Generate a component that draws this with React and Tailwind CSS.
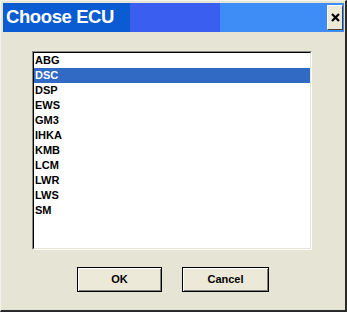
const items = ['ABG', 'DSC', 'DSP', 'EWS', 'GM3', 'IHKA', 'KMB', 'LCM', 'LWR', 'LWS', 'SM'];

export default function App() {
  const selected = 'DSC';

  return (
    <div className="w-[347px] h-[312px] flex flex-col bg-[#e6e5d5] border-t border-l border-t-[#f4f3ea] border-l-[#f4f3ea] border-r-2 border-b-2 border-r-[#2a2a2a] border-b-[#2a2a2a] pt-[2px] pl-[2px] pr-[1px] font-['Liberation_Sans',Arial,sans-serif]">
      {/* title bar */}
      <div className="h-[29px] flex items-center justify-between pl-[3px] pr-[1px] bg-[linear-gradient(to_right,#0b5bd3_0,#0b5bd3_127px,#3a5ef0_127px,#3a5ef0_217px,#3e8cf5_217px)]">
        <span className="text-white font-bold text-[18.5px] tracking-[-0.4px] leading-none">Choose ECU</span>
        <button className="w-[16px] h-[25px] flex items-center justify-center bg-[#ece9d8] border border-t-white border-l-white border-b-[#404040] border-r-[#404040]">
          <svg width="9" height="9" viewBox="0 0 9 9">
            <path d="M1 1 L8 8 M8 1 L1 8" stroke="#000" strokeWidth="2.2" />
          </svg>
        </button>
      </div>

      {/* body */}
      <div className="flex-1 flex flex-col pt-[19px]">
        <div className="ml-[29px] w-[280px] h-[199px] border border-t-[#8a8a80] border-l-[#8a8a80] border-b-white border-r-white">
          <div className="h-full bg-white border border-t-black border-l-black border-b-[#e6e5d5] border-r-[#e6e5d5]">
            {items.map((name) => (
              <div
                key={name}
                className={`h-[15px] pl-[1px] flex items-center text-[11px] font-bold leading-none ${
                  name === selected ? 'bg-[#316ac5] text-white' : 'text-black'
                }`}
              >
                {name}
              </div>
            ))}
          </div>
        </div>

        <div className="ml-[74px] flex gap-[20px] mt-[17px]">
          <button className="w-[85px] h-[25px] border border-black bg-[#ece9d8] shadow-[inset_1px_1px_0_#ffffff,inset_-1px_-1px_0_#808080] text-[11px] font-bold text-black">
            OK
          </button>
          <button className="w-[87px] h-[25px] border border-black bg-[#ece9d8] shadow-[inset_1px_1px_0_#ffffff,inset_-1px_-1px_0_#808080] text-[11px] font-bold text-black">
            Cancel
          </button>
        </div>
      </div>
    </div>
  );
}
